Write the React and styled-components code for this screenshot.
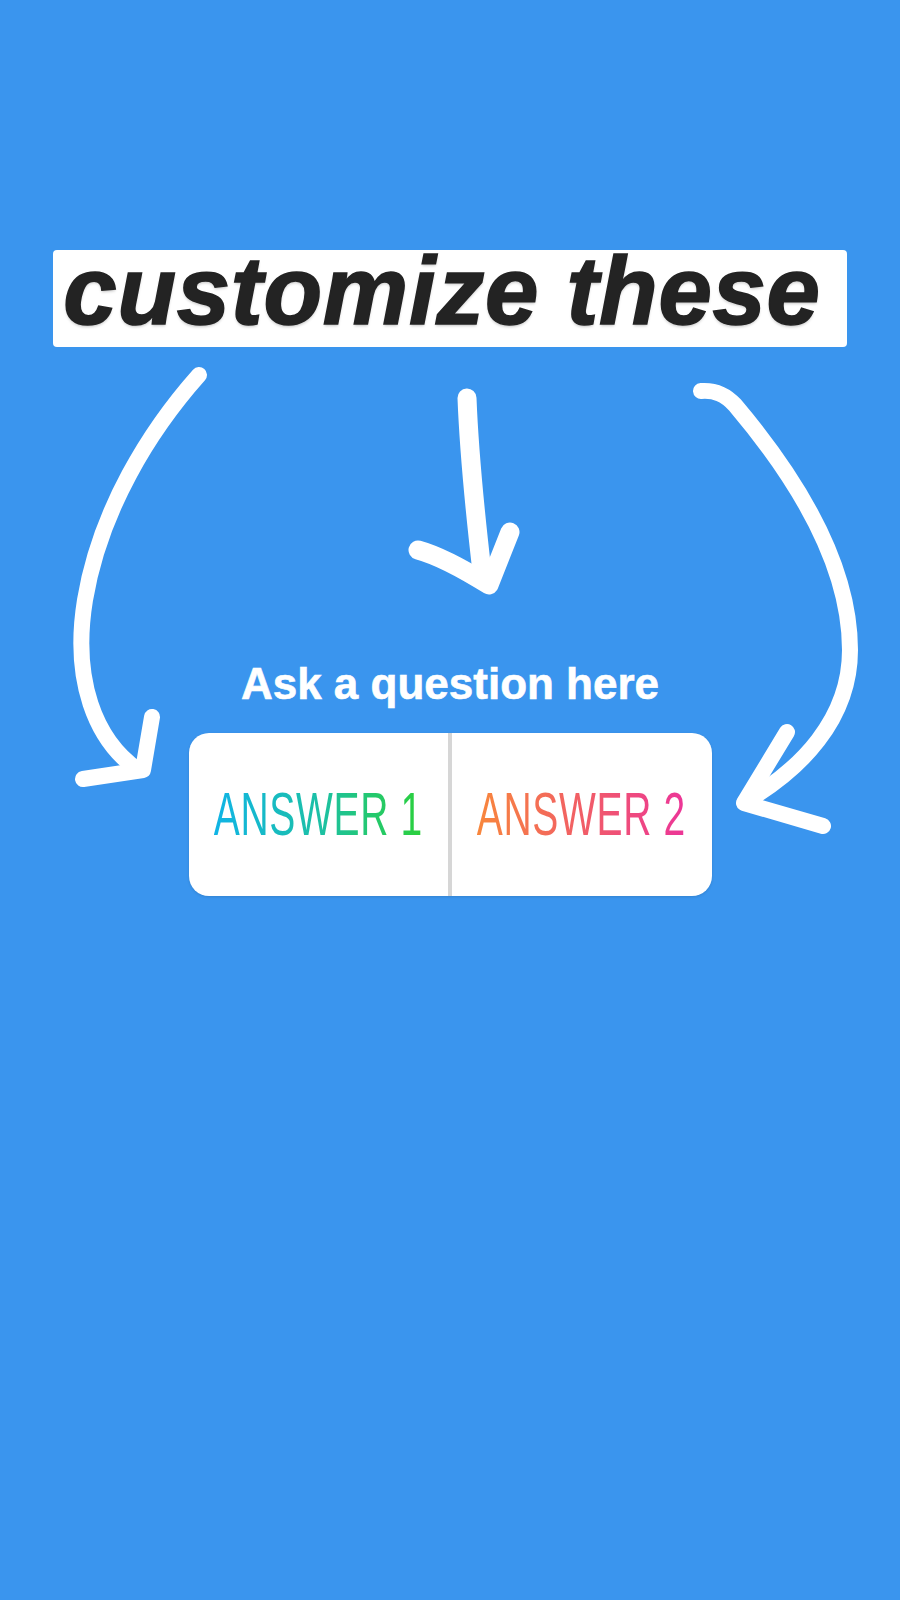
import styled, { createGlobalStyle } from "styled-components";

const GlobalStyle = createGlobalStyle`
  html, body {
    margin: 0;
    padding: 0;
    background-color: #3a95ee;
  }
`;

const Stage = styled.div`
  position: relative;
  width: 900px;
  min-height: 1600px;
  background-color: #3a95ee;
  display: flex;
  flex-direction: column;
  align-items: center;
  padding-top: 250px;
  box-sizing: border-box;
  font-family: "Liberation Sans", Arial, sans-serif;
`;

const Caption = styled.div`
  background-color: #fff;
  border-radius: 4px;
  padding: 0 26px 16px 10px;
  color: #232323;
  font-size: 96px;
  font-weight: 700;
  font-style: italic;
  line-height: 81px;
  letter-spacing: 0.7px;
  white-space: nowrap;
  -webkit-text-stroke: 1.6px #232323;
  text-shadow: 0 2px 3px rgba(0, 0, 0, 0.22);
`;

const Question = styled.div`
  margin-top: 311px;
  color: #fff;
  font-size: 44px;
  font-weight: 700;
  line-height: 1.2;
  -webkit-text-stroke: 0.6px #fff;
`;

const Poll = styled.div`
  margin-top: 22px;
  width: 523px;
  height: 163px;
  display: flex;
  background-color: #fff;
  border-radius: 20px;
  box-shadow: 0 1px 3px rgba(0, 0, 0, 0.12);
`;

const Choice = styled.div`
  flex: 1 1 0;
  min-width: 0;
  display: flex;
  align-items: center;
  justify-content: center;
  border-left: ${(p) => (p.$divided ? "4px solid #d6d6d6" : "none")};
`;

const AnswerText = styled.span`
  display: inline-block;
  flex-shrink: 0;
  font-size: 61px;
  font-weight: 400;
  line-height: 1;
  letter-spacing: 1px;
  white-space: nowrap;
  transform: scaleX(0.64);
  background: ${(p) => p.$gradient};
  -webkit-background-clip: text;
  background-clip: text;
  color: transparent;
`;

const Arrows = styled.svg`
  position: absolute;
  top: 0;
  left: 0;
  pointer-events: none;
`;

const stroke = {
  fill: "none",
  stroke: "#fff",
  strokeWidth: 16,
  strokeLinecap: "round",
  strokeLinejoin: "round",
};

const App = () => {
  return (
    <>
      <GlobalStyle />
      <Stage>
        <Caption>customize these</Caption>
        <Question>Ask a question here</Question>
        <Poll>
          <Choice>
            <AnswerText $gradient="linear-gradient(90deg, #10b4e6 0%, #1cc0a6 50%, #2bd03a 100%)">
              ANSWER 1
            </AnswerText>
          </Choice>
          <Choice $divided>
            <AnswerText $gradient="linear-gradient(90deg, #f8873c 0%, #f15e66 50%, #ec3598 100%)">
              ANSWER 2
            </AnswerText>
          </Choice>
        </Poll>
        <Arrows width="900" height="1600" viewBox="0 0 900 1600">
          {/* left curve */}
          <path {...stroke} d="M199 375 C150 430, 100 510, 85 600 C72 680, 95 740, 138 770" />
          <path {...stroke} d="M152 717 L143 770 L83 779" />
          {/* middle drop */}
          <path {...stroke} strokeWidth={19} d="M467 398 C469 450, 476 520, 482 572" />
          <path {...stroke} strokeWidth={19} d="M418 550 C440 556, 465 570, 489 585 L510 532" />
          {/* right curve */}
          <path {...stroke} d="M701 391 C715 390, 725 394, 735 405 C790 470, 850 560, 850 650 C850 720, 800 770, 745 802" />
          <path {...stroke} d="M787 732 L744 803 L823 826" />
        </Arrows>
      </Stage>
    </>
  );
};

export default App;
